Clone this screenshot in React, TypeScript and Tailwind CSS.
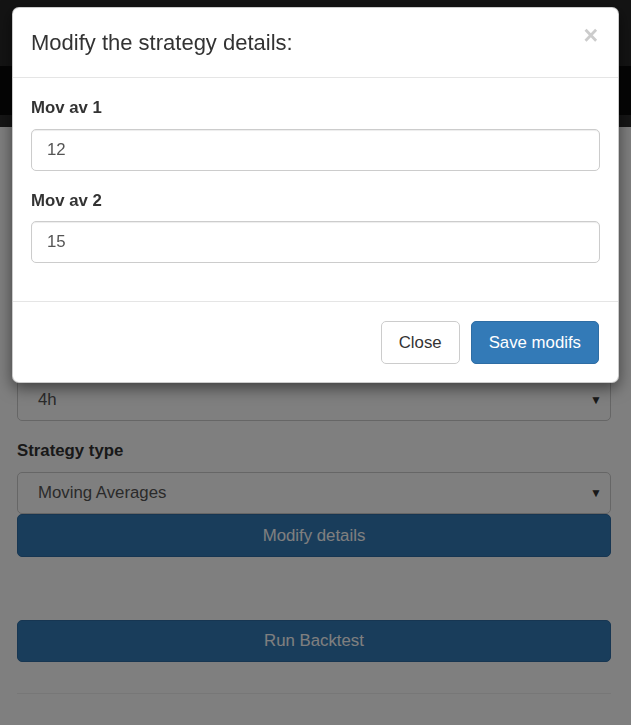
import React, { useState } from 'react';

const font = { fontFamily: '"Liberation Sans", Arial, sans-serif' };

const SelectBox = ({ value }: { value: string }) => (
  <div className="relative h-[42px] w-full rounded-[5px] border border-[#ccc] bg-white">
    <div className="flex h-full items-center pl-[20px] text-[16.8px] text-[#555]">{value}</div>
    <span className="absolute right-[8px] top-1/2 -translate-y-1/2 text-[12px] text-[#333]">▼</span>
  </div>
);

const App = () => {
  const [mov1, setMov1] = useState('12');
  const [mov2, setMov2] = useState('15');

  return (
    <div className="relative min-h-[725px] w-full overflow-hidden bg-white" style={font}>
      {/* page under the modal */}
      <div className="h-[66px] bg-[#282828]" />
      <div className="h-[49px] bg-[#0a0a0a]" />
      <div className="h-[12px] bg-[#2c2c2c]" />
      <div className="pl-[17px] pr-[20px] pt-[219px]">
        <div className="mb-[18px] flex flex-col">
          <label className="mb-[9px] text-[16.8px] leading-[24px] font-bold text-[#333]">Timeframe</label>
          <SelectBox value="4h" />
        </div>
        <div className="flex flex-col">
          <label className="mb-[9px] text-[16.8px] leading-[24px] font-bold text-[#333]">Strategy type</label>
          <SelectBox value="Moving Averages" />
          <button className="h-[43px] w-full rounded-[5px] border border-[#2e6da4] bg-[#337ab7] text-[16.8px] text-white">
            Modify details
          </button>
        </div>
        <button className="mt-[63px] h-[42px] w-full rounded-[5px] border border-[#2e6da4] bg-[#337ab7] text-[16.8px] text-white">
          Run Backtest
        </button>
        <hr className="mt-[31px] border-t border-[#eee]" />
      </div>

      {/* backdrop */}
      <div className="fixed inset-0 bg-black/50" />

      {/* modal */}
      <div className="absolute left-[12px] right-[12px] top-[7px] rounded-[7px] border border-black/20 bg-white shadow-[0_5px_15px_rgba(0,0,0,0.5)]">
        <div className="relative flex h-[70px] items-center border-b border-[#e5e5e5] px-[18px]">
          <h4 className="text-[22px] leading-[30px] text-[#333]">Modify the strategy details:</h4>
          <button className="absolute right-[20px] top-[15px] text-[25px] leading-[25px] font-bold text-[#ccc]">×</button>
        </div>
        <div className="px-[18px] pt-[18px] pb-[20px]">
          <div className="mb-[18px] flex flex-col">
            <label className="mb-[9px] text-[16.8px] leading-[24px] font-bold text-[#333]">Mov av 1</label>
            <input
              value={mov1}
              onChange={(e) => setMov1(e.target.value)}
              className="h-[42px] w-full rounded-[5px] border border-[#ccc] px-[15px] text-[16.8px] text-[#555] shadow-[inset_0_1px_1px_rgba(0,0,0,0.075)] outline-none"
            />
          </div>
          <div className="mb-[18px] flex flex-col">
            <label className="mb-[8px] text-[16.8px] leading-[24px] font-bold text-[#333]">Mov av 2</label>
            <input
              value={mov2}
              onChange={(e) => setMov2(e.target.value)}
              className="h-[42px] w-full rounded-[5px] border border-[#ccc] px-[15px] text-[16.8px] text-[#555] shadow-[inset_0_1px_1px_rgba(0,0,0,0.075)] outline-none"
            />
          </div>
        </div>
        <div className="flex justify-end gap-[11px] border-t border-[#e5e5e5] px-[19px] pt-[19px] pb-[18px]">
          <button className="h-[43px] rounded-[5px] border border-[#ccc] bg-white px-[17px] text-[16.8px] text-[#333]">
            Close
          </button>
          <button className="h-[43px] rounded-[5px] border border-[#2e6da4] bg-[#337ab7] px-[17px] text-[16.8px] text-white">
            Save modifs
          </button>
        </div>
      </div>
    </div>
  );
};

export default App;
